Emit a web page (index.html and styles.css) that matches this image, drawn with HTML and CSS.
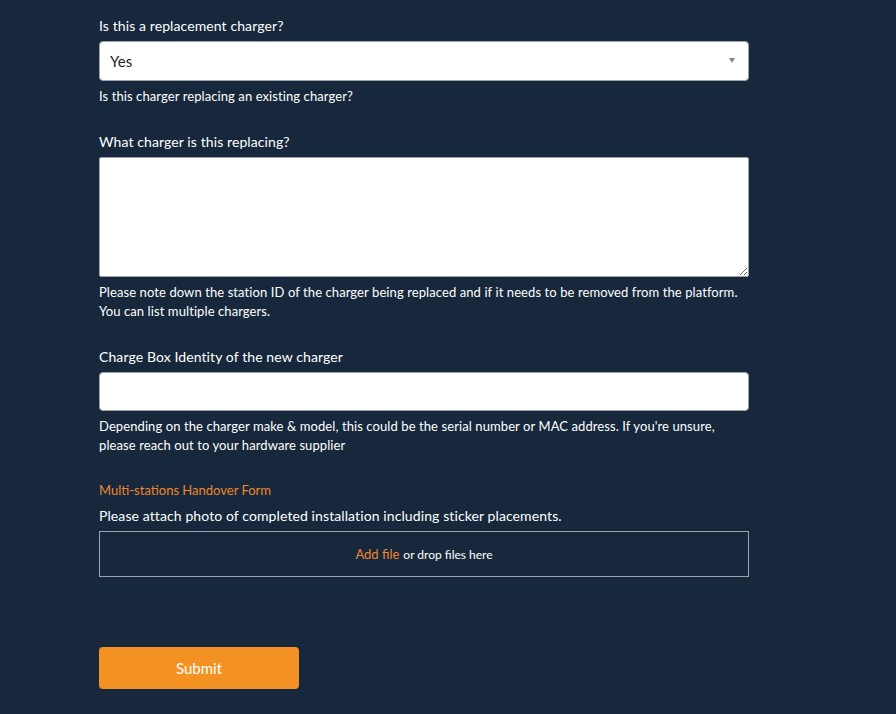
FILE: index.html
```html
<!DOCTYPE html>
<html lang="en">
<head>
  <meta charset="UTF-8" />
  <meta name="viewport" content="width=device-width, initial-scale=1.0" />
  <title>Charger Installation</title>
  <link rel="stylesheet" href="styles.css">
</head>
<body>
  <form class="install-form" id="installForm">
    <div class="field">
      <label for="replacement">Is this a replacement charger?</label>
      <div class="select-wrap">
        <select id="replacement">
          <option value="yes" selected>Yes</option>
          <option value="no">No</option>
        </select>
      </div>
      <p class="help">Is this charger replacing an existing charger?</p>
    </div>

    <div class="field">
      <label for="replacing">What charger is this replacing?</label>
      <textarea id="replacing"></textarea>
      <p class="help">Please note down the station ID of the charger being replaced and if it needs to be removed from the platform. You can list multiple chargers.</p>
    </div>

    <div class="field">
      <label for="identity">Charge Box Identity of the new charger</label>
      <input type="text" id="identity" />
      <p class="help">Depending on the charger make &amp; model, this could be the serial number or MAC address. If you're unsure, please reach out to your hardware supplier</p>
    </div>

    <div class="field upload">
      <a class="form-link" href="#">Multi-stations Handover Form</a>
      <label class="attach-label">Please attach photo of completed installation including sticker placements.</label>
      <div class="dropzone">
        <a class="add-file" href="#">Add file</a> <span>or drop files here</span>
      </div>
    </div>

    <button type="submit">Submit</button>
  </form>
</body>
</html>
```

FILE: styles.css
```css
body {
  font-family: Lato, "Open Sans", sans-serif;
  background: #17283c;
  color: #fff;
  margin: 0;
  padding: 0;
}

.install-form {
  width: 650px;
  margin-left: 99px;
  padding-top: 16px;
}

.field {
  margin-bottom: 26px;
}

.field.upload {
  margin-top: -1px;
}

label {
  display: block;
  font-size: 14px;
  line-height: 20px;
  letter-spacing: 0.1px;
  margin-bottom: 5px;
}

.select-wrap {
  position: relative;
}

.select-wrap::after {
  content: "";
  position: absolute;
  right: 14px;
  top: 17px;
  border-left: 3px solid transparent;
  border-right: 3px solid transparent;
  border-top: 5px solid #888;
}

select,
input,
textarea {
  display: block;
  width: 100%;
  box-sizing: border-box;
  background: #fff;
  border: 1px solid #9aa3ad;
  border-radius: 4px;
  font-family: inherit;
  font-size: 14px;
  color: #222;
  margin: 0;
}

select {
  height: 40px;
  padding: 0 10px;
  font-size: 15px;
  appearance: none;
  -webkit-appearance: none;
}

textarea {
  height: 120px;
  padding: 8px 10px;
  border-radius: 2px;
  resize: vertical;
}

input {
  height: 39px;
  padding: 0 10px;
}

.help {
  font-size: 13px;
  line-height: 19px;
  letter-spacing: 0.09px;
  margin: 6px 0 0;
}

.form-link {
  display: block;
  color: #f0862a;
  font-size: 13px;
  text-decoration: none;
  line-height: 20px;
  margin-bottom: 6px;
}

.attach-label {
  margin-bottom: 5px;
}

.dropzone {
  height: 46px;
  box-sizing: border-box;
  border: 1px solid #9aa3ad;
  display: flex;
  align-items: center;
  justify-content: center;
  gap: 4px;
  font-size: 12px;
}

.add-file {
  color: #f0862a;
  font-size: 13px;
  text-decoration: none;
}

button {
  width: 200px;
  height: 42px;
  margin-top: 44px;
  background: #f39122;
  color: #fff;
  border: none;
  border-radius: 4px;
  font-family: inherit;
  font-size: 15px;
  cursor: pointer;
}
```
